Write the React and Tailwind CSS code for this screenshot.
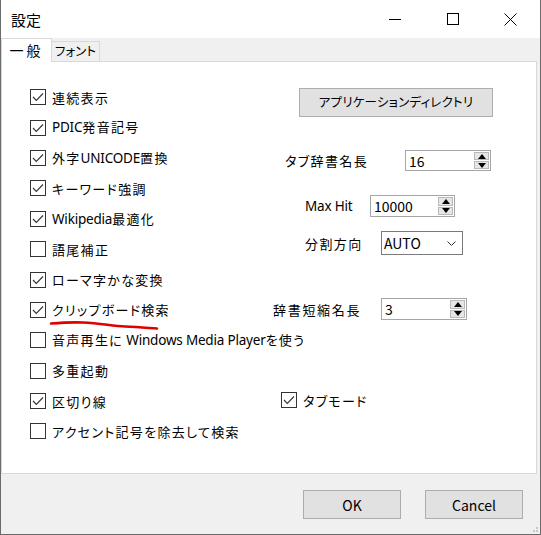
import React from "react";

const font = "font-['Noto_Sans_CJK_JP','Noto_Sans',sans-serif] [font-feature-settings:'palt']";

// latin runs are narrower in the original UI font, so render them in Noto Sans
function Mixed({ text }) {
  const parts = text.split(/([A-Za-z0-9 ]+)/).filter(Boolean);
  return parts.map((p, i) =>
    /^[A-Za-z0-9 ]+$/.test(p) ? (
      <span key={i} className="font-['Noto_Sans',sans-serif] text-[13.5px] tracking-[-0.2px]">
        {p.replace(/ /g, "\u00a0")}
      </span>
    ) : (
      <span key={i}>{p}</span>
    )
  );
}

function Check({ checked }) {
  return (
    <span className="flex h-[16px] w-[16px] shrink-0 items-center justify-center border border-[#333333] bg-white">
      {checked && (
        <svg width="14" height="14" viewBox="0 0 14 14" fill="none">
          <path d="M2 7 L5.3 10.5 L12 3.5" stroke="#333333" strokeWidth="1.1" />
        </svg>
      )}
    </span>
  );
}

function CheckRow({ label, checked, children }) {
  return (
    <div className="relative flex h-[30.4px] items-center gap-[6px] whitespace-nowrap">
      <Check checked={checked} />
      <span className="text-[13px] leading-none tracking-[1.3px] text-black">
        <Mixed text={label} />
      </span>
      {children}
    </div>
  );
}

function Spin({ value, w, h }) {
  return (
    <div
      className="flex items-stretch border border-[#a6a6a6] bg-white"
      style={{ width: w, height: h }}
    >
      <span className="flex flex-1 items-center pl-[3px] text-[14px] leading-none text-black">{value}</span>
      <div className="my-[1px] mr-[1px] flex w-[15px] flex-col gap-[1px]">
        <span className="flex flex-1 items-center justify-center border border-[#b9b9b9] bg-[#e6e6e6]">
          <svg width="8" height="5" viewBox="0 0 8 5"><path d="M0 5 L4 0 L8 5 Z" fill="#000" /></svg>
        </span>
        <span className="flex flex-1 items-center justify-center border border-[#b9b9b9] bg-[#e6e6e6]">
          <svg width="8" height="5" viewBox="0 0 8 5"><path d="M0 0 L8 0 L4 5 Z" fill="#000" /></svg>
        </span>
      </div>
    </div>
  );
}

const left = [
  ["連続表示", true],
  ["PDIC発音記号", true],
  ["外字UNICODE置換", true],
  ["キーワード強調", true],
  ["Wikipedia最適化", true],
  ["語尾補正", false],
  ["ローマ字かな変換", true],
  ["クリップボード検索", true],
  ["音声再生に Windows Media Playerを使う", false],
  ["多重起動", false],
  ["区切り線", true],
  ["アクセント記号を除去して検索", false],
];

export default function App() {
  return (
    <div className={`${font} flex h-[535px] w-[541px] flex-col border-x border-b border-[#6b6b6b] bg-[#f0f0f0] text-black`}>
      {/* title bar */}
      <div className="flex h-[38px] shrink-0 items-center bg-white">
        <span className="ml-[10px] text-[15px] leading-none">設定</span>
        <div className="ml-auto flex h-full items-center">
          <div className="flex h-full w-[58px] items-center justify-center">
            <svg width="12" height="12" viewBox="0 0 12 12"><path d="M0 6.5 H12" stroke="#000" strokeWidth="1" /></svg>
          </div>
          <div className="flex h-full w-[58px] items-center justify-center">
            <svg width="12" height="12" viewBox="0 0 12 12"><rect x="0.5" y="0.5" width="11" height="11" fill="none" stroke="#000" strokeWidth="1" /></svg>
          </div>
          <div className="flex h-full w-[58px] items-center justify-center pr-[2px]">
            <svg width="13" height="13" viewBox="0 0 13 13"><path d="M0.5 0.5 L12.5 12.5 M12.5 0.5 L0.5 12.5" stroke="#000" strokeWidth="1" /></svg>
          </div>
        </div>
      </div>

      {/* tabs */}
      <div className="flex h-[24px] shrink-0 items-end">
        <div className="relative z-10 flex h-[24px] w-[51px] items-center justify-center border border-b-0 border-[#d9d9d9] bg-white pb-[2px] text-[14px] leading-none tracking-[3px]">
          一般
        </div>
        <div className="flex h-[21px] w-[48px] items-center justify-center whitespace-nowrap border border-l-0 border-[#d9d9d9] bg-[#f0f0f0] text-[12.5px] leading-none">
          フォント
        </div>
      </div>

      {/* panel */}
      <div className="-mt-px flex h-[413px] w-[536px] shrink-0 border border-[#d9d9d9] bg-white">
        <div className="flex w-[271px] shrink-0 flex-col pl-[28px] pt-[20px]">
          {left.map(([label, checked]) => (
            <CheckRow key={label} label={label} checked={checked}>
              {label === "クリップボード検索" && (
                <svg className="absolute left-[19px] top-[24px]" width="114" height="14" viewBox="0 0 114 14" fill="none">
                  <path d="M2 4.5 C14 3.5 24 3 34 3.5 C52 4.5 64 7 76 7.5 C90 8 100 9 108 9.5" stroke="#e00000" strokeWidth="2.6" strokeLinecap="round" />
                </svg>
              )}
            </CheckRow>
          ))}
        </div>

        <div className="flex flex-col pt-[26px] text-[13px] leading-none">
          <button className="ml-[26px] flex h-[29px] w-[194px] items-center justify-center border border-[#adadad] bg-[#e1e1e1] text-[12.5px] tracking-[0.2px]">
            アプリケーションディレクトリ
          </button>

          <div className="mt-[33px] flex items-center">
            <span className="ml-[12px] w-[120px] whitespace-nowrap tracking-[1.4px]">タブ辞書名長</span>
            <Spin value="16" w={86} h={21} />
          </div>

          <div className="mt-[24px] flex items-center">
            <span className="ml-[32px] w-[65px] whitespace-nowrap">
              <Mixed text="Max Hit" />
            </span>
            <Spin value="10000" w={85} h={22} />
          </div>

          <div className="mt-[14px] flex items-center">
            <span className="ml-[32px] w-[76px] whitespace-nowrap tracking-[1.4px]">分割方向</span>
            <div className="flex h-[24px] w-[82px] items-center border border-[#7a7a7a] bg-white pl-[2px] pr-[6px] text-[14px]">
              <span className="flex-1">AUTO</span>
              <svg width="9" height="5" viewBox="0 0 9 5" fill="none"><path d="M0.5 0.5 L4.5 4.5 L8.5 0.5" stroke="#333" strokeWidth="1" /></svg>
            </div>
          </div>

          <div className="mt-[43px] flex items-center">
            <span className="w-[108px] whitespace-nowrap tracking-[1.7px]">辞書短縮名長</span>
            <Spin value="3" w={86} h={22} />
          </div>

          <div className="ml-[8px] mt-[72px] flex items-center gap-[6px]">
            <Check checked />
            <span className="tracking-[1.3px]">タブモード</span>
          </div>
        </div>
      </div>

      {/* buttons */}
      <div className="mt-[16px] flex gap-[24px] pl-[302px] text-[14px] leading-none">
        <button className="flex h-[29px] w-[98px] items-center justify-center border border-[#adadad] bg-[#e1e1e1]">OK</button>
        <button className="flex h-[29px] w-[98px] items-center justify-center border border-[#adadad] bg-[#e1e1e1]">Cancel</button>
      </div>

      <div className="mt-auto flex justify-end pb-[2px] pr-[2px]">
        <svg width="5" height="5" viewBox="0 0 5 5"><rect x="0" y="3" width="2" height="2" fill="#c8c8c8" /><rect x="3" y="3" width="2" height="2" fill="#c8c8c8" /><rect x="3" y="0" width="2" height="2" fill="#c8c8c8" /></svg>
      </div>
    </div>
  );
}
